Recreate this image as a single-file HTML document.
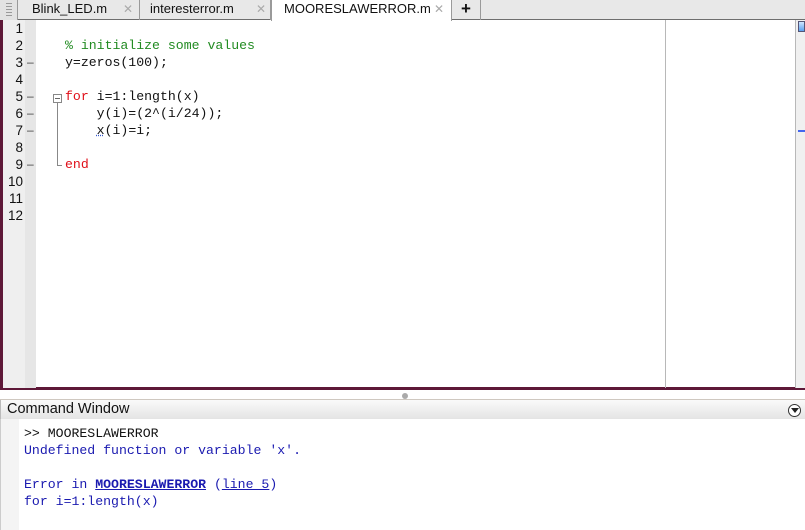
<!DOCTYPE html>
<html><head><meta charset="utf-8"><style>
*{margin:0;padding:0;box-sizing:border-box}
body{width:805px;height:530px;overflow:hidden;background:#fff;position:relative;font-family:"Liberation Sans",sans-serif}
.abs{position:absolute}
.mono{font-family:"Liberation Mono","DejaVu Sans Mono",monospace;font-size:13.2px;white-space:pre}
#tabs{left:0;top:0;width:805px;height:20px;background:#e8e8e8;border-bottom:1px solid #6e6e6e}
.tab{position:absolute;top:0;height:20px;border-right:1px solid #9a9a9a;font-size:13px;color:#111;line-height:18px}
.tab .x{position:absolute;color:#aaa;font-size:12px;top:0}
#frame{left:0;top:20px;width:805px;height:370px;border-left:3px solid #5e1838;border-bottom:3px solid #5e1838}
.ln{position:absolute;left:3px;width:20px;text-align:right;color:#111;font-size:13.5px}
.dash{position:absolute;left:27px;color:#444;font-size:12px}
#code{position:absolute;left:0;top:1px;width:805px;height:300px}
</style></head><body>
<div id="tabs" class="abs">
  <div class="abs" style="left:0;top:0;width:18px;height:20px;border-right:1px solid #999;background:#e2e2e2"></div>
  <div class="abs" style="left:6px;top:3px;width:6px;height:14px;background:repeating-linear-gradient(#999 0 1px,transparent 1px 3px)"></div>
  <div class="tab" style="left:19px;width:121px"><span style="position:absolute;left:13px">Blink_LED.m</span><span class="x" style="left:104px">✕</span></div>
  <div class="tab" style="left:140px;width:131px"><span style="position:absolute;left:10px">interesterror.m</span><span class="x" style="left:116px">✕</span></div>
  <div class="tab" style="left:271px;width:181px;background:#fff;height:21px;border-left:1px solid #9a9a9a"><span style="position:absolute;left:12px">MOORESLAWERROR.m</span><span class="x" style="left:162px">✕</span></div>
  <div class="tab" style="left:452px;width:29px;font-weight:bold;font-size:17px;text-align:center">+</div>
</div>
<div id="frame" class="abs"></div>
<div class="abs" style="left:3px;top:20px;width:22px;height:368px;background:#efefef"></div>
<div class="abs" style="left:25px;top:20px;width:11px;height:368px;background:#e6e6e6"></div>
<div class="abs" style="left:665px;top:20px;width:1px;height:368px;background:#b8b8b8"></div>
<div class="abs" style="left:795px;top:20px;width:1px;height:368px;background:#b8b8b8"></div>
<div class="abs" style="left:796px;top:20px;width:9px;height:368px;background:#f0f0f0"></div>
<div class="abs" style="left:798px;top:21px;width:7px;height:11px;background:linear-gradient(#cfe6ff,#5aa0f0);border:1px solid #557"></div>
<div class="abs" style="left:798px;top:130px;width:7px;height:2px;background:#4466ee"></div>

<div id="code">
<div class="ln" style="top:20px">1</div>
<div class="ln" style="top:37px">2</div>
<div class="ln" style="top:54px">3</div><div class="dash" style="top:54px">–</div>
<div class="ln" style="top:71px">4</div>
<div class="ln" style="top:88px">5</div><div class="dash" style="top:88px">–</div>
<div class="ln" style="top:105px">6</div><div class="dash" style="top:105px">–</div>
<div class="ln" style="top:122px">7</div><div class="dash" style="top:122px">–</div>
<div class="ln" style="top:139px">8</div>
<div class="ln" style="top:156px">9</div><div class="dash" style="top:156px">–</div>
<div class="ln" style="top:173px">10</div>
<div class="ln" style="top:190px">11</div>
<div class="ln" style="top:207px">12</div>

<div class="abs mono" style="left:65px;top:37px;color:#228b22">% initialize some values</div>
<div class="abs mono" style="left:65px;top:54px;color:#111">y=zeros(100);</div>
<div class="abs mono" style="left:65px;top:88px;color:#111"><span style="color:#e0101a">for</span> i=1:length(x)</div>
<div class="abs mono" style="left:65px;top:105px;color:#111">    y(i)=(2^(i/24));</div>
<div class="abs mono" style="left:65px;top:122px;color:#111">    <span style="text-decoration:underline dotted #3355cc">x</span>(i)=i;</div>
<div class="abs mono" style="left:65px;top:156px;color:#e0101a">end</div>
<div class="abs" style="left:53px;top:93px;width:9px;height:9px;border:1px solid #888;background:#fff"></div>
<div class="abs" style="left:55px;top:97px;width:5px;height:1px;background:#666"></div>
<div class="abs" style="left:57px;top:102px;width:1px;height:62px;background:#888"></div>
<div class="abs" style="left:57px;top:164px;width:5px;height:1px;background:#888"></div>
</div>

<div class="abs" style="left:0;top:390px;width:805px;height:9px;background:#fff"></div>
<div class="abs" style="left:402px;top:393px;width:6px;height:6px;border-radius:50%;background:#aaa"></div>
<div class="abs" style="left:0;top:399px;width:805px;height:1px;background:#cfc8c0"></div>
<div class="abs" style="left:0;top:400px;width:805px;height:19px;background:linear-gradient(#fafafa,#e4e4e4);border-left:1px solid #bbb"></div>
<div class="abs" style="left:7px;top:401px;font-size:14.5px;color:#111">Command Window</div>
<div class="abs" style="left:788px;top:404px;width:13px;height:13px;border:1px solid #333;border-radius:50%;background:#fff"></div>
<div class="abs" style="left:791px;top:408px;width:0;height:0;border-left:4px solid transparent;border-right:4px solid transparent;border-top:5px solid #222"></div>
<div class="abs" style="left:0;top:419px;width:1px;height:111px;background:#ccc"></div>
<div class="abs" style="left:1px;top:419px;width:18px;height:111px;background:#f4f4f4"></div>

<div class="abs mono" style="left:24px;top:426px;color:#111">&gt;&gt; MOORESLAWERROR</div>
<div class="abs mono" style="left:24px;top:443px;color:#1a1ab0">Undefined function or variable 'x'.</div>
<div class="abs mono" style="left:24px;top:477px;color:#1a1ab0">Error in <b style="text-decoration:underline">MOORESLAWERROR</b> (<span style="text-decoration:underline">line 5</span>)</div>
<div class="abs mono" style="left:24px;top:494px;color:#1a1ab0">for i=1:length(x)</div>
</body></html>
